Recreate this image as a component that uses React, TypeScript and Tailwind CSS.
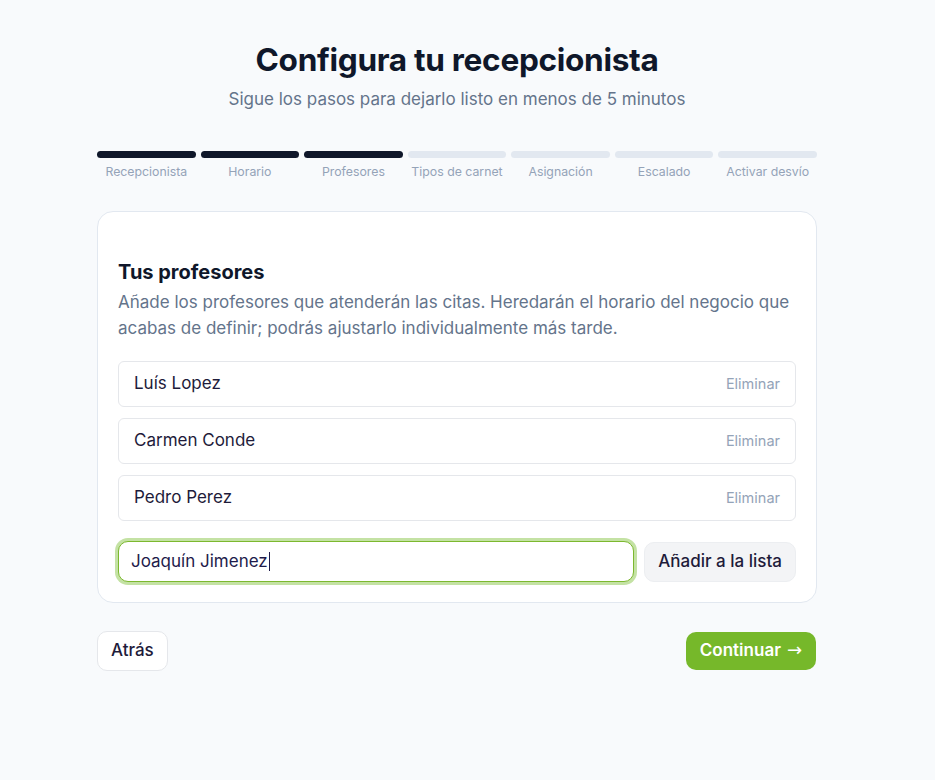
import React from "react";

const steps = [
  { label: "Recepcionista", done: true },
  { label: "Horario", done: true },
  { label: "Profesores", done: true },
  { label: "Tipos de carnet", done: false },
  { label: "Asignación", done: false },
  { label: "Escalado", done: false },
  { label: "Activar desvío", done: false },
];

const teachers = ["Luís Lopez", "Carmen Conde", "Pedro Perez"];

export default function App() {
  return (
    <div
      className="min-h-[780px] bg-[#f8fafc] flex justify-center pr-[21px]"
      style={{ fontFamily: "Inter, 'Noto Sans', sans-serif" }}
    >
      <div className="w-[720px] pt-[40px]">
        <h1 className="text-center text-[31.6px] leading-[40px] font-bold text-[#0f172a] tracking-[-0.01em]">
          Configura tu recepcionista
        </h1>
        <p className="text-center text-[17px] leading-[24px] text-[#64748b] mt-[7px]">
          Sigue los pasos para dejarlo listo en menos de 5 minutos
        </p>

        <div className="grid grid-cols-7 gap-[5px] mt-[40px]">
          {steps.map((s) => (
            <div key={s.label} className="flex flex-col items-center">
              <div
                className={
                  s.done
                    ? "h-[7px] w-full rounded-full bg-[#0f172a]"
                    : "h-[7px] w-full rounded-full bg-[#e2e8f0]"
                }
              />
              <span className="text-[12.3px] leading-[16px] text-[#94a3b8] mt-[6px] whitespace-nowrap">
                {s.label}
              </span>
            </div>
          ))}
        </div>

        <div className="mt-[31px] bg-white border border-[#e2e8f0] rounded-[16px] px-[20px] pt-[47px] pb-[20px]">
          <h2 className="text-[20px] leading-[26px] font-bold text-[#0f172a]">Tus profesores</h2>
          <p className="text-[17px] leading-[26px] text-[#64748b] mt-[4px]">
            Añade los profesores que atenderán las citas. Heredarán el horario del negocio que
            acabas de definir; podrás ajustarlo individualmente más tarde.
          </p>

          <div className="flex flex-col gap-[11px] mt-[20px]">
            {teachers.map((t) => (
              <div
                key={t}
                className="h-[46px] flex items-center justify-between border border-[#e5e7eb] rounded-[6px] pl-[15px] pr-[15px]"
              >
                <span className="text-[17px] text-[#1e1b3a]">{t}</span>
                <span className="text-[14.5px] text-[#94a3b8]">Eliminar</span>
              </div>
            ))}
          </div>

          <div className="flex gap-[10px] mt-[20px] items-center">
            <div className="flex-1 h-[41px] rounded-[10px] border-[1.5px] border-[#7cb82f] ring-[3px] ring-[#c4e2a4] bg-white flex items-center pl-[12px]">
              <span className="text-[17px] text-[#1e1b4b]">Joaquín Jimenez</span>
              <span className="w-[1px] h-[19px] bg-[#1e1b4b] ml-[1px]" />
            </div>
            <button className="h-[40px] px-[13px] rounded-[10px] bg-[#f3f4f6] border border-[#eceef1] text-[17px] font-medium text-[#1e1b3a]">
              Añadir a la lista
            </button>
          </div>
        </div>

        <div className="flex justify-between items-center mt-[28px] pr-[1px]">
          <button className="h-[40px] px-[13px] rounded-[10px] bg-white border border-[#e5e7eb] text-[17px] font-medium text-[#1e1b3a]">
            Atrás
          </button>
          <button className="h-[38px] px-[14px] rounded-[10px] bg-[#76b82a] text-white text-[17px] font-semibold flex items-center">
            Continuar
            <span
              className="ml-[6px] font-normal text-[18px] leading-none -mt-[2px]"
              style={{ fontFamily: "'DejaVu Sans', sans-serif" }}
            >
              →
            </span>
          </button>
        </div>
      </div>
    </div>
  );
}
